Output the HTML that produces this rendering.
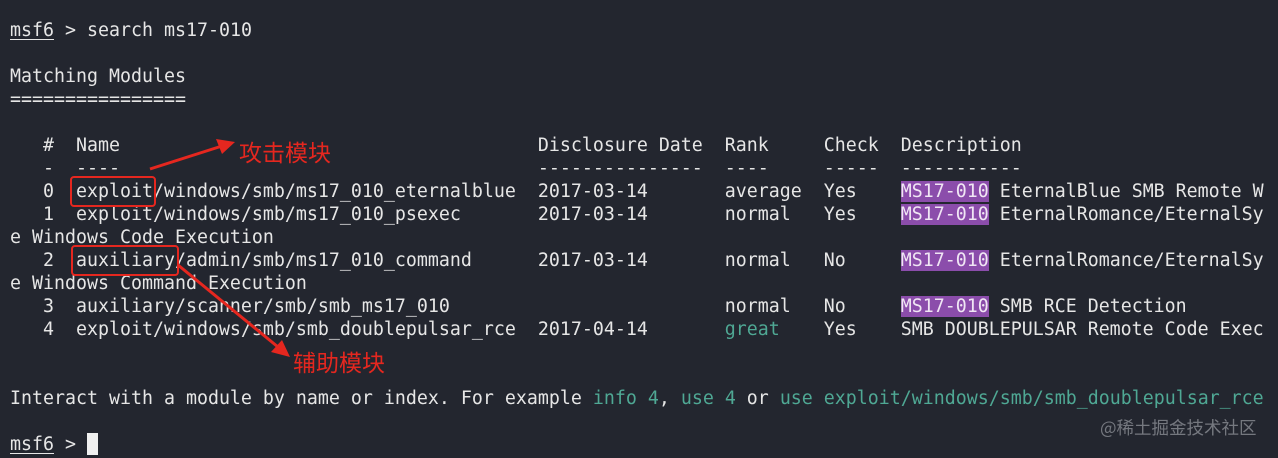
<!DOCTYPE html>
<html><head><meta charset="utf-8"><style>
html,body{margin:0;padding:0;background:#23262f;width:1278px;height:458px;overflow:hidden}
.t{position:absolute;left:10px;top:19px;margin:0;font-family:"DejaVu Sans Mono","Liberation Mono",monospace;font-size:18.27px;line-height:23px;color:#e6e6e6;white-space:pre}
.u{text-decoration:underline;text-underline-offset:3px}
.p{background:#8b4dab;color:#f0e6f4}
.g{color:#4fa894}
.cur{display:inline-block;width:11px;height:22px;background:#f0f0f0;vertical-align:-5px}
.box{position:absolute;border:2.5px solid #e5271f;border-radius:4px}
.lbl{position:absolute;color:#e5271f;font-family:"Noto Sans CJK SC",sans-serif;font-size:23px;line-height:1}
.wm{position:absolute;left:1100px;top:419px;color:#8a8d94;font-family:"Noto Sans CJK SC",sans-serif;font-size:17.5px;line-height:1;opacity:.8}
</style></head><body>
<pre class="t"><span class="u">msf6</span> &gt; search ms17-010

Matching Modules
================

   #  Name                                      Disclosure Date  Rank     Check  Description
   -  ----                                      ---------------  ----     -----  -----------
   0  exploit/windows/smb/ms17_010_eternalblue  2017-03-14       average  Yes    <span class="p">MS17-010</span> EternalBlue SMB Remote W
   1  exploit/windows/smb/ms17_010_psexec       2017-03-14       normal   Yes    <span class="p">MS17-010</span> EternalRomance/EternalSy
e Windows Code Execution
   2  auxiliary/admin/smb/ms17_010_command      2017-03-14       normal   No     <span class="p">MS17-010</span> EternalRomance/EternalSy
e Windows Command Execution
   3  auxiliary/scanner/smb/smb_ms17_010                         normal   No     <span class="p">MS17-010</span> SMB RCE Detection
   4  exploit/windows/smb/smb_doublepulsar_rce  2017-04-14       <span class="g">great</span>    Yes    SMB DOUBLEPULSAR Remote Code Exec


Interact with a module by name or index. For example <span class="g">info 4</span>, <span class="g">use 4</span> or <span class="g">use exploit/windows/smb/smb_doublepulsar_rce</span>

<span class="u">msf6</span> &gt; <span class="cur"></span></pre>
<div class="box" style="left:70px;top:176px;width:82px;height:27px"></div>
<div class="box" style="left:71px;top:245px;width:104px;height:27px"></div>
<svg width="1278" height="458" style="position:absolute;left:0;top:0">
<line x1="150" y1="169" x2="222" y2="146" stroke="#e5271f" stroke-width="3"/>
<polygon points="235,142 216,139 222,154" fill="#e5271f"/>
<line x1="178" y1="265" x2="278" y2="347" stroke="#e5271f" stroke-width="3"/>
<polygon points="290,357 271,352 282,340" fill="#e5271f"/>
</svg>
<div class="lbl" style="left:239px;top:140px">攻击模块</div>
<div class="lbl" style="left:293px;top:350px">辅助模块</div>
<div class="wm">@稀土掘金技术社区</div>
</body></html>
